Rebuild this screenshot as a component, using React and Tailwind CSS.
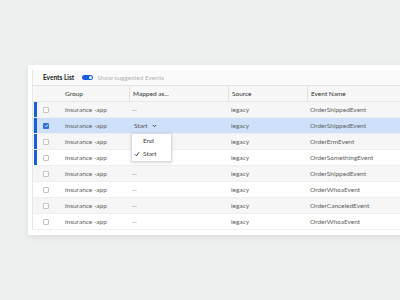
import React from 'react';

const rows = [
  { event: 'OrderShippedEvent', mapped: '--', flag: true, shade: true },
  { event: 'OrderShippedEvent', mapped: 'Start', flag: true, selected: true },
  { event: 'OrderErmEvent', mapped: '--', flag: true, shade: true },
  { event: 'OrderSomethingEvent', mapped: '--', flag: true },
  { event: 'OrderShippedEvent', mapped: '--', shade: true },
  { event: 'OrderWhoaEvent', mapped: '--' },
  { event: 'OrderCanceledEvent', mapped: '--', shade: true },
  { event: 'OrderWhoaEvent', mapped: '--' },
];

function Checkbox({ checked }) {
  if (checked) {
    return (
      <div className="w-[6px] h-[6px] rounded-[1px] bg-[#2f6fe0] flex items-center justify-center">
        <svg width="5" height="5" viewBox="0 0 10 10">
          <path d="M2 5.2 L4.2 7.4 L8.2 2.8" fill="none" stroke="white" strokeWidth="1.8" />
        </svg>
      </div>
    );
  }
  return <div className="w-[6px] h-[6px] rounded-[1px] border-[0.5px] border-[#c4c4c4] bg-white" />;
}

function Dropdown() {
  return (
    <div className="absolute left-[2px] top-[15px] w-[41px] h-[29px] bg-white border border-[#dcdcdc] shadow-[0_1px_3px_rgba(0,0,0,0.15)] z-10 flex flex-col justify-center gap-[5px] text-[#444]">
      <div className="pl-[11px] leading-[8px]">End</div>
      <div className="flex items-center gap-[3px] pl-[2px] leading-[8px]">
        <svg width="6" height="6" viewBox="0 0 10 10">
          <path d="M1.5 5.5 L4 8 L8.5 2" fill="none" stroke="#333" strokeWidth="1.6" />
        </svg>
        <span>Start</span>
      </div>
    </div>
  );
}

export default function App() {
  return (
    <div
      className="w-[400px] h-[300px] bg-[#eef0f0] overflow-hidden pt-[65px] pl-[28px] text-[6.5px] text-[#626262]"
      style={{ fontFamily: 'Lato, "Open Sans", sans-serif' }}
    >
      <div className="w-[400px] h-[170px] bg-white shadow-[0_2px_6px_rgba(0,0,0,0.08)] pt-[5px] pl-[4px]">
        <div className="border-l border-[#e6e6e6]">
          <div className="h-[16px] flex items-center pl-[10px] bg-[#fafafa] border-b border-[#e4e4e4]">
            <span className="font-bold text-[#222] text-[6.5px]">Events List</span>
            <div className="ml-[8px] w-[11px] h-[5px] rounded-full bg-[#1a5ee0] flex items-center justify-end pr-[1px]">
              <div className="w-[3px] h-[3px] rounded-full bg-white" />
            </div>
            <span className="ml-[4px] text-[#b4b4b4]">Show suggested Events</span>
          </div>
          <div className="h-[16px] flex items-center bg-[#f7f7f7] text-[#333] border-b border-[#e8e8e8]">
            <div className="w-[28px] h-full" />
            <div className="w-[68px] h-full flex items-center pl-[4px]">Group</div>
            <div className="w-[99px] h-full flex items-center pl-[3px] border-l border-[#e0e0e0]">Mapped as...</div>
            <div className="w-[79px] h-full flex items-center pl-[3px] border-l border-[#e0e0e0]">Source</div>
            <div className="flex-1 h-full flex items-center pl-[3px] border-l border-[#e0e0e0]">Event Name</div>
          </div>
          {rows.map((r, i) => (
            <div
              key={i}
              className={`h-[16px] flex items-center border-b border-[#efefef] ${
                r.selected ? 'bg-[#cfe0fb]' : r.shade ? 'bg-[#f6f6f6]' : 'bg-white'
              }`}
            >
              <div className="w-[28px] h-full flex items-center">
                <div className={`w-[3px] h-full ml-[1px] ${r.flag ? 'bg-[#1a5ee0]' : ''}`} />
                <div className="ml-[6px]">
                  <Checkbox checked={r.selected} />
                </div>
              </div>
              <div className="w-[68px] pl-[4px]">insurance -app</div>
              <div className="w-[99px] pl-[3px] relative h-full flex items-center">
                {r.selected ? (
                  <>
                    <span className="pl-[2px] text-[#555]">Start</span>
                    <svg className="ml-[4px]" width="5" height="4" viewBox="0 0 10 8">
                      <path d="M1.5 2 L5 5.5 L8.5 2" fill="none" stroke="#333" strokeWidth="1.8" />
                    </svg>
                    <Dropdown />
                  </>
                ) : (
                  <span>{r.mapped}</span>
                )}
              </div>
              <div className="w-[79px] pl-[3px]">legacy</div>
              <div className="flex-1 pl-[3px]">{r.event}</div>
            </div>
          ))}
        </div>
      </div>
    </div>
  );
}
